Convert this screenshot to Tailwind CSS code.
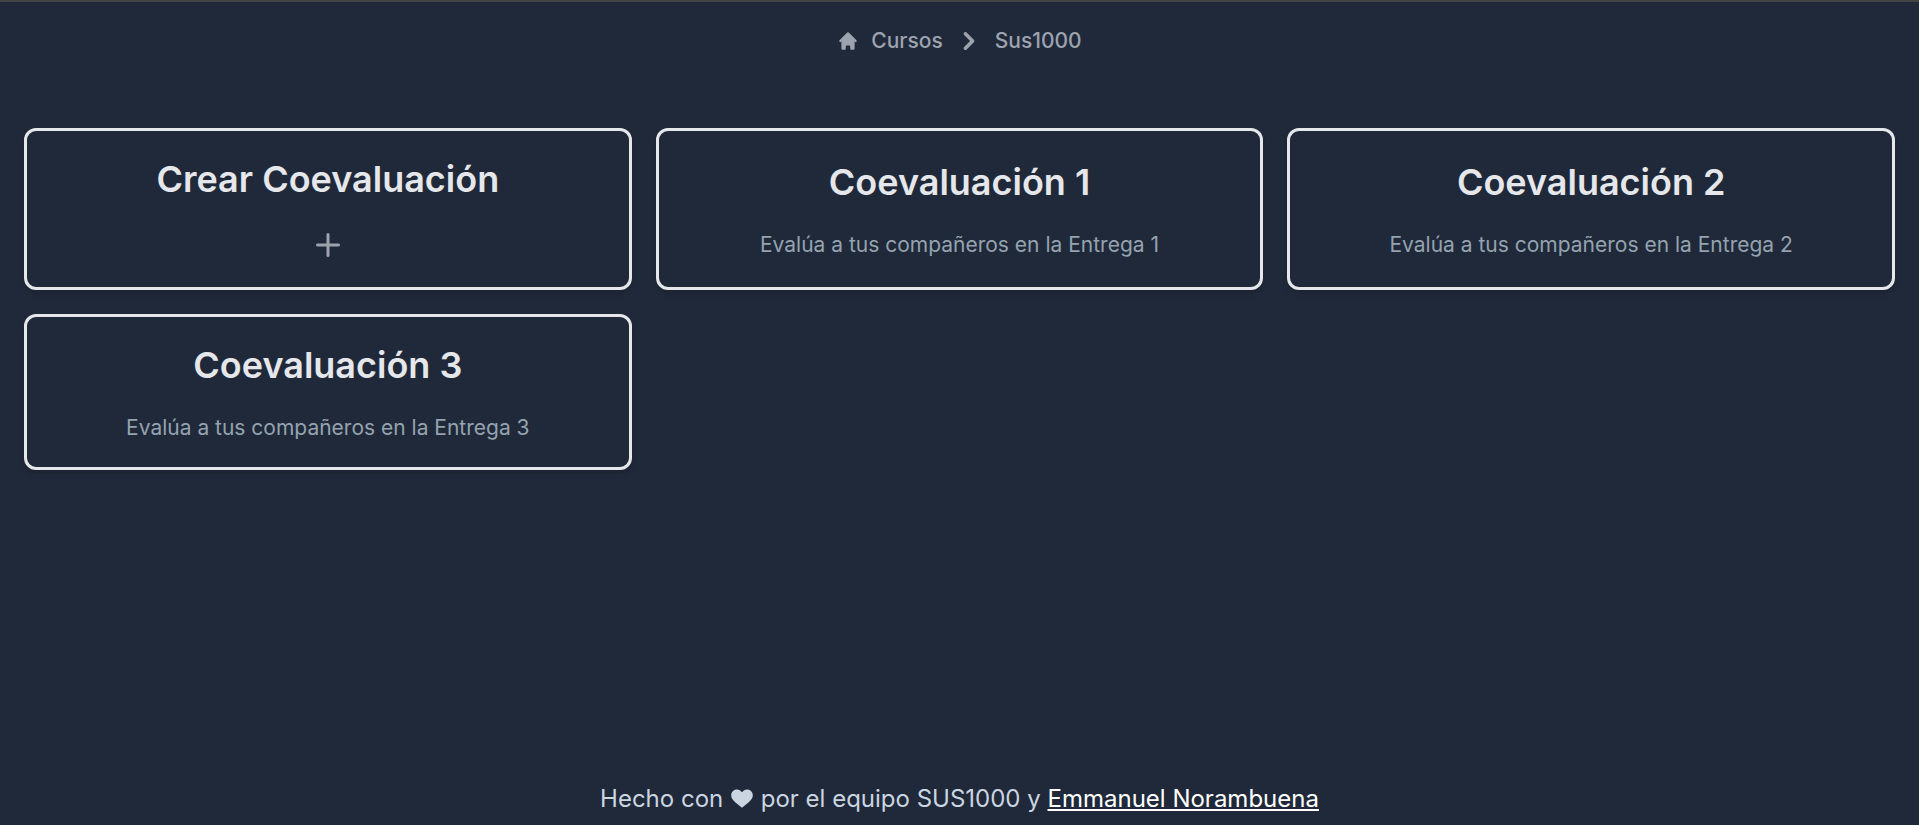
<!DOCTYPE html>
<html lang="es">
<head>
<meta charset="utf-8">
<meta name="viewport" content="width=device-width, initial-scale=1">
<title>Sus1000</title>
<script src="https://cdn.jsdelivr.net/npm/@tailwindcss/browser@4"></script>
</head>
<body class="flex min-h-screen flex-col border-t-2 border-[#444444] bg-[#202939] font-['Inter',sans-serif]">
<nav aria-label="Ruta" class="flex justify-center pt-[21px]">
  <ol class="flex items-center text-[21px]/7 font-medium text-[#9ca3af]">
    <li>
      <a href="#cursos" class="flex items-center gap-3">
        <svg class="size-[22px]" viewBox="0 0 20 20" fill="currentColor" aria-hidden="true"><path d="M10.707 2.293a1 1 0 00-1.414 0l-7 7a1 1 0 001.414 1.414L4 10.414V17a1 1 0 001 1h2a1 1 0 001-1v-2a1 1 0 011-1h2a1 1 0 011 1v2a1 1 0 001 1h2a1 1 0 001-1v-6.586l.293.293a1 1 0 001.414-1.414l-7-7z"/></svg>
        Cursos
      </a>
    </li>
    <li class="flex items-center">
      <svg class="mx-2 size-9" viewBox="0 0 20 20" fill="currentColor" aria-hidden="true"><path fill-rule="evenodd" d="M7.293 14.707a1 1 0 010-1.414L10.586 10 7.293 6.707a1 1 0 011.414-1.414l4 4a1 1 0 010 1.414l-4 4a1 1 0 01-1.414 0z"/></svg>
      <a href="#sus1000">Sus1000</a>
    </li>
  </ol>
</nav>

<main class="mt-[69px] grid grid-cols-3 gap-6 px-6 text-center">
  <a href="#crear" class="flex flex-col items-center justify-center gap-6 rounded-xl border-3 border-[#e5e7eb] p-6 shadow-md">
    <h2 class="text-4xl/[48px] font-semibold text-[#e5e7eb]">Crear Coevaluación</h2>
    <svg class="size-9 text-[#9ca3af]" viewBox="0 0 24 24" fill="none" stroke="currentColor" stroke-width="2" stroke-linecap="round" aria-hidden="true"><path d="M12 5v14m7-7H5"/></svg>
  </a>
  <a href="#coevaluacion-1" class="flex flex-col items-center justify-center gap-6 rounded-xl border-3 border-[#e5e7eb] p-6 shadow-md">
    <h2 class="text-4xl/[48px] font-semibold text-[#e5e7eb]">Coevaluación 1</h2>
    <p class="text-[21px]/[30px] text-[#94a3af]">Evalúa a tus compañeros en la Entrega 1</p>
  </a>
  <a href="#coevaluacion-2" class="flex flex-col items-center justify-center gap-6 rounded-xl border-3 border-[#e5e7eb] p-6 shadow-md">
    <h2 class="text-4xl/[48px] font-semibold text-[#e5e7eb]">Coevaluación 2</h2>
    <p class="text-[21px]/[30px] text-[#94a3af]">Evalúa a tus compañeros en la Entrega 2</p>
  </a>
  <a href="#coevaluacion-3" class="flex flex-col items-center justify-center gap-6 rounded-xl border-3 border-[#e5e7eb] p-6 shadow-md">
    <h2 class="text-4xl/[48px] font-semibold text-[#e5e7eb]">Coevaluación 3</h2>
    <p class="text-[21px]/[30px] text-[#94a3af]">Evalúa a tus compañeros en la Entrega 3</p>
  </a>
</main>

<footer class="mt-auto flex items-center justify-center pb-2 text-2xl/9 text-[#cbd5e1]">
  <p>Hecho con <svg class="inline size-6 align-[-4px]" viewBox="0 0 24 24" fill="currentColor" role="img" aria-label="amor"><path d="M12 5.2C10.8 3.7 9 2.5 6.9 2.5C3.7 2.5 1.2 5 1.2 8.3C1.2 12.6 5 15.2 12 20.8C19 15.2 22.8 12.6 22.8 8.3C22.8 5 20.3 2.5 17.1 2.5C15 2.5 13.2 3.7 12 5.2z"/></svg> por el equipo SUS1000 y <a href="#autor" class="text-white underline">Emmanuel Norambuena</a></p>
</footer>
</body>
</html>
